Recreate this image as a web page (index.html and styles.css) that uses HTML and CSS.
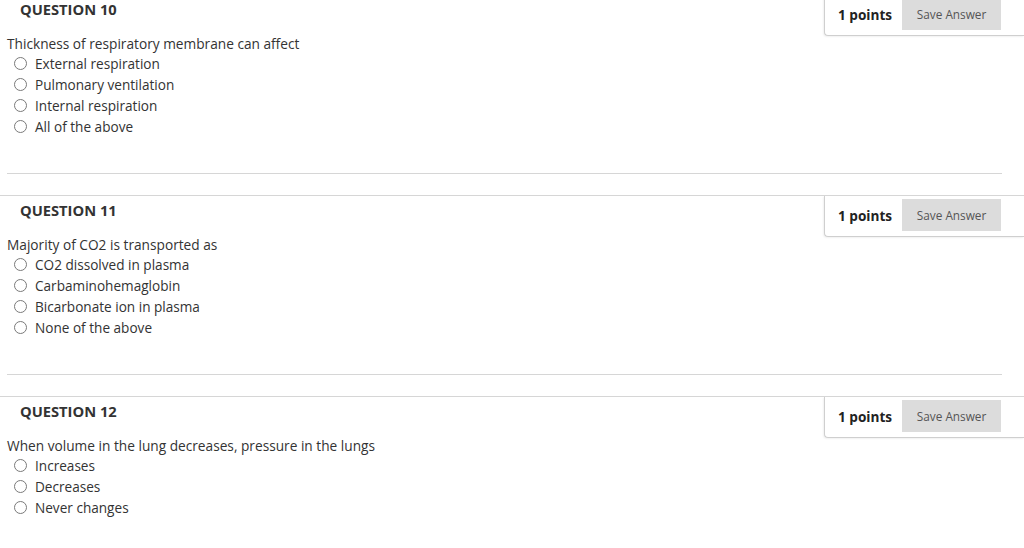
FILE: index.html
```html
<!DOCTYPE html>
<html>
<head>
<meta charset="utf-8">
<link rel="stylesheet" href="styles.css">
</head>
<body>
<div class="page">
  <section class="question">
    <div class="q-head">
      <h3 class="q-title">QUESTION 10</h3>
      <div class="points-box">
        <span class="points">1 points</span>
        <button class="save">Save Answer</button>
      </div>
    </div>
    <p class="q-text">Thickness of respiratory membrane can affect</p>
    <ul class="options">
      <li class="option"><span class="radio"></span>External respiration</li>
      <li class="option"><span class="radio"></span>Pulmonary ventilation</li>
      <li class="option"><span class="radio"></span>Internal respiration</li>
      <li class="option"><span class="radio"></span>All of the above</li>
    </ul>
    <hr class="sep">
  </section>
  <section class="question">
    <div class="q-head">
      <h3 class="q-title">QUESTION 11</h3>
      <div class="points-box">
        <span class="points">1 points</span>
        <button class="save">Save Answer</button>
      </div>
    </div>
    <p class="q-text">Majority of CO2 is transported as</p>
    <ul class="options">
      <li class="option"><span class="radio"></span>CO2 dissolved in plasma</li>
      <li class="option"><span class="radio"></span>Carbaminohemaglobin</li>
      <li class="option"><span class="radio"></span>Bicarbonate ion in plasma</li>
      <li class="option"><span class="radio"></span>None of the above</li>
    </ul>
    <hr class="sep">
  </section>
  <section class="question">
    <div class="q-head">
      <h3 class="q-title">QUESTION 12</h3>
      <div class="points-box">
        <span class="points">1 points</span>
        <button class="save">Save Answer</button>
      </div>
    </div>
    <p class="q-text">When volume in the lung decreases, pressure in the lungs</p>
    <ul class="options">
      <li class="option"><span class="radio"></span>Increases</li>
      <li class="option"><span class="radio"></span>Decreases</li>
      <li class="option"><span class="radio"></span>Never changes</li>
    </ul>
    <hr class="sep">
  </section>
</div>
</body>
</html>
```

FILE: styles.css
```css
html, body {
  margin: 0;
  padding: 0;
  background: #fff;
}
body {
  font-family: "Open Sans", "Liberation Sans", sans-serif;
  color: #333;
  overflow: hidden;
}
.page {
  margin-top: -6px;
}
.question {
  border-top: 1px solid #d6d6d6;
}
.q-head {
  display: flex;
  justify-content: space-between;
  align-items: flex-start;
  height: 38px;
}
.q-title {
  margin: 0;
  padding: 4px 0 0 20px;
  font-size: 14.7px;
  line-height: 20px;
  font-weight: 700;
  color: #333;
}
.points-box {
  box-sizing: border-box;
  width: 200px;
  height: 41px;
  display: flex;
  align-items: center;
  gap: 10px;
  padding: 3px 23px 5px 13px;
  border-left: 1px solid #cfcfcf;
  border-bottom: 1px solid #cfcfcf;
  border-bottom-left-radius: 4px;
  box-shadow: -1px 1px 2px rgba(0,0,0,0.06);
  background: #fff;
  position: relative;
  z-index: 1;
}
.points {
  font-size: 13.6px;
  font-weight: 700;
  color: #222;
  white-space: nowrap;
}
.save {
  width: 100px;
  height: 32px;
  border: none;
  background: #dcdcdc;
  color: #555;
  font-family: "Open Sans", "Liberation Sans", sans-serif;
  font-size: 11.8px;
  padding: 0;
  margin-left: auto;
}
.q-text {
  margin: 0;
  padding: 2px 0 0 7px;
  font-size: 13.7px;
  line-height: 18px;
  color: #333;
}
.options {
  list-style: none;
  margin: 0;
  padding: 0;
}
.option {
  display: flex;
  align-items: center;
  gap: 8px;
  padding-left: 14px;
  font-size: 13.6px;
  line-height: 21px;
  color: #333;
}
.radio {
  box-sizing: border-box;
  width: 13px;
  height: 13px;
  border: 1px solid #7a7a7a;
  border-radius: 50%;
  background: #fff;
  flex: none;
}
.sep {
  margin: 36px 22px 21px 7px;
  border: none;
  border-top: 1px solid #d6d6d6;
  height: 0;
}
```
